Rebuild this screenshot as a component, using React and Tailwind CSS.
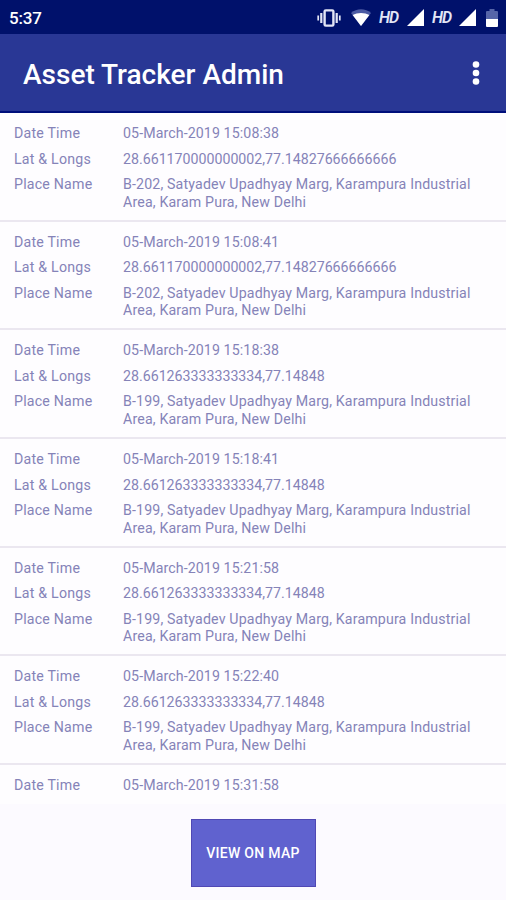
import React from "react";

const records = [
    { time: "05-March-2019 15:08:38", coords: "28.661170000000002,77.14827666666666", plot: "B-202" },
    { time: "05-March-2019 15:08:41", coords: "28.661170000000002,77.14827666666666", plot: "B-202" },
    { time: "05-March-2019 15:18:38", coords: "28.661263333333334,77.14848", plot: "B-199" },
    { time: "05-March-2019 15:18:41", coords: "28.661263333333334,77.14848", plot: "B-199" },
    { time: "05-March-2019 15:21:58", coords: "28.661263333333334,77.14848", plot: "B-199" },
    { time: "05-March-2019 15:22:40", coords: "28.661263333333334,77.14848", plot: "B-199" },
    { time: "05-March-2019 15:31:58" },
];

function VibrateIcon() {
    return (
        <svg width="24" height="18" viewBox="0 0 24 18" fill="none" stroke="#e3e6f6">
            <rect x="7.6" y="1.4" width="8.8" height="15.2" rx="1.2" strokeWidth="2.4" />
            <path d="M4.3 4v10M19.7 4v10" strokeWidth="2.2" />
            <path d="M1.2 6.4v5.2M22.8 6.4v5.2" strokeWidth="1.7" />
        </svg>
    );
}

function WifiIcon() {
    return (
        <svg width="20" height="17" viewBox="0 0 20 17">
            <path d="M0 4C5.6-.9 14.4-.9 20 4L10 17z" fill="#4c5ba3" />
            <path d="M1.6 6.1C6.3 3.4 13.7 3.4 18.4 6.1L10 17z" fill="#fff" />
        </svg>
    );
}

function SignalIcon() {
    return (
        <svg width="17" height="17" viewBox="0 0 17 17">
            <path d="M17 0v17H0z" fill="#fff" />
        </svg>
    );
}

function BatteryIcon() {
    return (
        <svg width="12" height="18" viewBox="0 0 12 18">
            <path d="M3.5 0h5v2H11a1 1 0 0 1 1 1v7H0V3a1 1 0 0 1 1-1h2.5z" fill="#5665a8" />
            <path d="M0 10h12v7a1 1 0 0 1-1 1H1a1 1 0 0 1-1-1z" fill="#fff" />
        </svg>
    );
}

function HdLabel() {
    return (
        <span className="ml-[8px] w-[21px] pt-px text-[16px] leading-none font-semibold italic tracking-[-0.9px] text-[#e3e6f6]">HD</span>
    );
}

function StatusBar() {
    return (
        <div className="flex h-[34px] shrink-0 items-center bg-[#00116b] pt-px pl-[9px] pr-2 text-white">
            <span className="pt-[2px] text-[17px] font-medium tracking-[-0.2px]">5:37</span>
            <div className="ml-auto flex items-center">
                <VibrateIcon />
                <div className="ml-[10px]"><WifiIcon /></div>
                <HdLabel />
                <div className="ml-[7px]"><SignalIcon /></div>
                <HdLabel />
                <div className="ml-[6px]"><SignalIcon /></div>
                <div className="ml-[10px]"><BatteryIcon /></div>
            </div>
        </div>
    );
}

function Field({ label, children }) {
    return (
        <div className="flex pb-2 leading-[17.5px]">
            <span className="w-[109px] shrink-0 tracking-[0.2px]">{label}</span>
            <span>{children}</span>
        </div>
    );
}

function RecordRow({ record }) {
    return (
        <li className="h-[108.7px] border-b-2 border-[#ebe7f0] pl-[14px] pt-[12px]">
            <Field label="Date Time"><span className="tracking-[0.1px]">{record.time}</span></Field>
            {record.coords && (
                <>
                    <Field label="Lat &amp; Longs">{record.coords}</Field>
                    <Field label="Place Name">
                        <span className="tracking-[0.15px]">
                            {record.plot}, Satyadev Upadhyay Marg, Karampura Industrial
                            <br />
                            Area, Karam Pura, New Delhi
                        </span>
                    </Field>
                </>
            )}
        </li>
    );
}

function App() {
    return (
        <div className="flex h-[900px] w-[506px] flex-col overflow-hidden bg-[#fcfaff] font-['Roboto',sans-serif]">
            <StatusBar />
            <header className="flex h-[79px] shrink-0 items-center justify-between border-b-2 border-[#000f7b] bg-[#293795] pl-[23px] pr-[26px] text-white">
                <h1 className="pt-[5px] text-[28px] font-medium">Asset Tracker Admin</h1>
                <button type="button" aria-label="More options" className="pt-px">
                    <svg width="8" height="24" viewBox="0 0 8 24" fill="#fff">
                        <circle cx="4" cy="3.5" r="3.3" />
                        <circle cx="4" cy="12" r="3.3" />
                        <circle cx="4" cy="20.5" r="3.3" />
                    </svg>
                </button>
            </header>

            <ul className="h-[691px] shrink-0 overflow-hidden bg-[#fefdff] text-[14.2px] text-[#8583b8]">
                {records.map((record) => (
                    <RecordRow key={record.time} record={record} />
                ))}
            </ul>

            <footer className="flex justify-center pt-[15px]">
                <button type="button" className="h-[68px] w-[125px] border border-[#5048b4] bg-[#6062cf] text-[14px] font-medium tracking-[0.3px] text-white">
                    VIEW ON MAP
                </button>
            </footer>
        </div>
    );
}

export default App;
